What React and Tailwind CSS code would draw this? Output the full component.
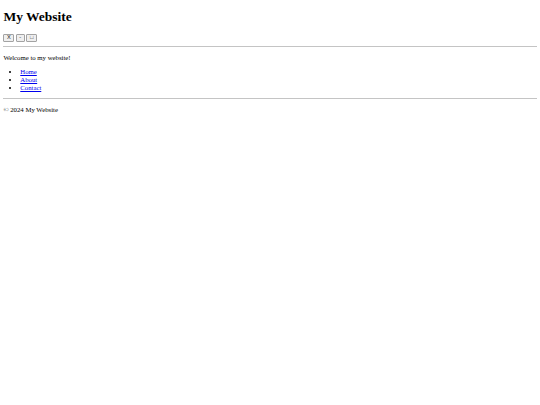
import React from "react";

const Btn = ({ children }) => (
  <button className="h-[8.9px] px-[2.5px] mr-[1.7px] text-[5.6px] leading-none font-['Liberation_Sans',sans-serif] border-[0.8px] border-[#a3a3a3] rounded-[1px] bg-[#efefef] text-[#222] inline-flex items-center justify-center">
    {children}
  </button>
);

export default function App() {
  return (
    <div className="w-[540px] h-[405px] bg-white px-[3.4px] pt-[9px] text-black font-['Liberation_Serif',serif] text-[6.75px] leading-[7.76px]">
      <header>
        <h1 className="text-[13.5px] font-bold leading-[15.5px]">My Website</h1>
        <div className="flex mt-[9px] h-[9.3px]">
          <Btn>X</Btn>
          <Btn>-</Btn>
          <Btn>□</Btn>
        </div>
      </header>
      <hr className="mt-[3.4px] border-t border-[#c4c4c4]" />
      <main className="pt-[6.75px]">
        <p>Welcome to my website!</p>
        <ul className="list-disc pl-[16.9px] mt-[6.75px] leading-[7.6px]">
          <li>
            <a href="#" className="underline text-[#0000ee]">Home</a>
          </li>
          <li>
            <a href="#" className="underline text-[#0000ee]">About</a>
          </li>
          <li>
            <a href="#" className="underline text-[#0000ee]">Contact</a>
          </li>
        </ul>
      </main>
      <hr className="mt-[6.75px] border-t border-[#c4c4c4]" />
      <footer className="pt-[6.75px]">
        <p>© 2024 My Website</p>
      </footer>
    </div>
  );
}
